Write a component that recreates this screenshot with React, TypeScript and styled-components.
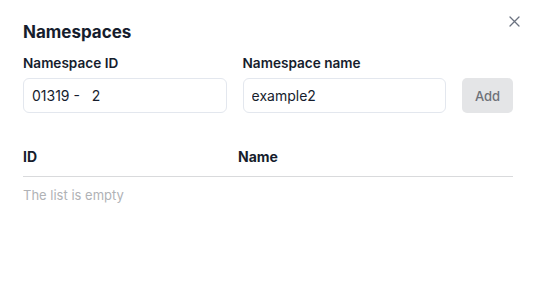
import React from 'react'
import styled, { createGlobalStyle } from 'styled-components'

const GlobalStyle = createGlobalStyle`
  html, body {
    margin: 0;
    padding: 0;
    background: #ffffff;
  }
  body {
    font-family: Inter, "Liberation Sans", sans-serif;
    color: #161d2d;
  }
`

const Dialog = styled.div`
  position: relative;
  width: 533px;
  height: 287px;
  box-sizing: border-box;
  padding: 20px 20px 0 23px;
  background: #fff;
`

const Title = styled.h2`
  margin: 0;
  font-size: 17px;
  line-height: 24px;
  font-weight: 700;
  color: #161d2d;
`

const CloseButton = styled.button`
  position: absolute;
  top: 14px;
  right: 12px;
  width: 14px;
  height: 14px;
  padding: 0;
  border: none;
  background: none;
  display: flex;
  align-items: center;
  justify-content: center;
  color: #6b7280;
`

const Form = styled.div`
  display: flex;
  align-items: flex-end;
  gap: 16px;
  margin-top: 11px;
`

const Field = styled.label`
  display: flex;
  flex-direction: column;
  gap: 7px;
  width: 204px;
`

const Label = styled.span`
  font-size: 13.6px;
  line-height: 16px;
  font-weight: 600;
  color: #161d2d;
`

const Input = styled.input`
  box-sizing: border-box;
  height: 35px;
  width: 100%;
  padding: 0 8px;
  border: 1px solid #e3e7ee;
  border-radius: 6px;
  font-family: Inter, "Liberation Sans", sans-serif;
  font-size: 14px;
  color: #161d2d;
  outline: none;
  white-space: pre;
`

const AddButton = styled.button`
  height: 35px;
  width: 51px;
  border: none;
  border-radius: 5px;
  background: #e4e5e7;
  color: #6e7179;
  font-family: Inter, "Liberation Sans", sans-serif;
  font-size: 13px;
  font-weight: 500;
`

const Table = styled.div`
  margin-top: 36px;
`

const HeaderRow = styled.div`
  display: grid;
  grid-template-columns: 215px 1fr;
  padding-bottom: 11px;
  border-bottom: 1px solid #d9dadc;
`

const HeaderCell = styled.span`
  font-size: 14px;
  line-height: 16px;
  font-weight: 700;
  color: #161d2d;
`

const Empty = styled.div`
  margin-top: 10px;
  font-size: 13px;
  line-height: 16px;
  color: #b0b2b6;
`

const App: React.FC = () => {
  return (
    <>
      <GlobalStyle />
      <Dialog>
        <Title>Namespaces</Title>
        <CloseButton aria-label="Close">
          <svg width="11" height="11" viewBox="0 0 11 11" fill="none" stroke="currentColor" strokeWidth="1.3" strokeLinecap="round">
            <path d="M1 1L10 10M10 1L1 10" />
          </svg>
        </CloseButton>
        <Form>
          <Field>
            <Label>Namespace ID</Label>
            <Input defaultValue="01319 -   2" />
          </Field>
          <Field>
            <Label>Namespace name</Label>
            <Input defaultValue="example2" />
          </Field>
          <AddButton>Add</AddButton>
        </Form>
        <Table>
          <HeaderRow>
            <HeaderCell>ID</HeaderCell>
            <HeaderCell>Name</HeaderCell>
          </HeaderRow>
          <Empty>The list is empty</Empty>
        </Table>
      </Dialog>
    </>
  )
}

export default App
